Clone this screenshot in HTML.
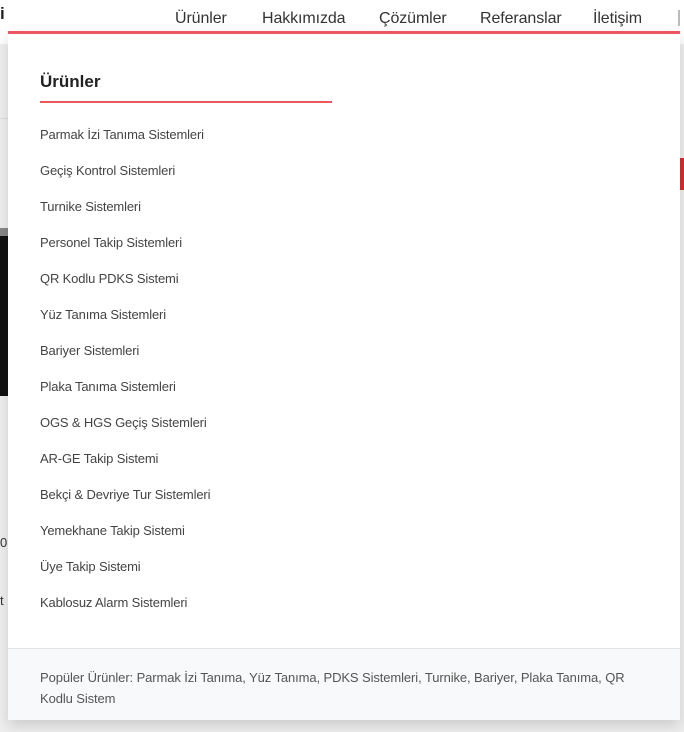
<!DOCTYPE html>
<html><head><meta charset="utf-8"><style>
*{margin:0;padding:0;box-sizing:border-box}
body{width:684px;height:732px;overflow:hidden;background:#efefef;font-family:"Liberation Sans",sans-serif;position:relative}
.hdr{position:absolute;left:0;top:0;width:684px;height:44px;background:#fff}
.nav{position:absolute;top:10px;font-size:16px;color:#333;letter-spacing:-0.1px;white-space:nowrap}
.bg1{position:absolute;left:0;top:118px;width:8px;height:1px;background:#ddd}
.img{position:absolute;left:0;top:236px;width:8px;height:160px;background:#111}
.img2{position:absolute;left:0;top:228px;width:8px;height:8px;background:#888}
.red{position:absolute;left:680px;top:158px;width:4px;height:32px;background:#d32f2f}
.panel{position:absolute;left:8px;top:31px;width:672px;height:689px;background:#fff;box-shadow:0 6px 14px rgba(0,0,0,.15)}
.bar{position:absolute;left:0;top:0;width:672px;height:3px;background:#eb5660}
.title{position:absolute;left:32px;top:41px;font-size:17px;font-weight:bold;color:#222}
.uline{position:absolute;left:32px;top:70px;width:292px;height:2px;background:#eb5660}
.item{position:absolute;left:32px;font-size:13px;color:#444;letter-spacing:-0.15px;white-space:nowrap}
.foot{position:absolute;left:0;top:617px;width:672px;height:72px;background:#f8f9fa;border-top:1px solid #e4e4e4;padding:18px 32px 0;font-size:13px;line-height:21px;color:#555;letter-spacing:-0.1px}
</style></head><body>
<div class="hdr"></div>
<div style="position:absolute;left:0;top:4px;font-size:17px;font-weight:bold;color:#222">i</div>
<div class="nav" style="left:175px">Ürünler</div>
<div class="nav" style="left:262px">Hakkımızda</div>
<div class="nav" style="left:379px">Çözümler</div>
<div class="nav" style="left:480px">Referanslar</div>
<div class="nav" style="left:593px">İletişim</div>
<div style="position:absolute;left:678px;top:10px;width:2px;height:16px;background:#bbb"></div>
<div class="bg1"></div><div class="img2"></div><div class="img"></div><div class="red"></div>
<div style="position:absolute;left:0;top:535px;font-size:13px;color:#333">0</div>
<div style="position:absolute;left:0;top:593px;font-size:13px;color:#333">t</div>
<div class="panel">
<div class="bar"></div>
<div class="title">Ürünler</div>
<div class="uline"></div>
<div class="item" style="top:96px">Parmak İzi Tanıma Sistemleri</div>
<div class="item" style="top:132px">Geçiş Kontrol Sistemleri</div>
<div class="item" style="top:168px">Turnike Sistemleri</div>
<div class="item" style="top:204px">Personel Takip Sistemleri</div>
<div class="item" style="top:240px">QR Kodlu PDKS Sistemi</div>
<div class="item" style="top:276px">Yüz Tanıma Sistemleri</div>
<div class="item" style="top:312px">Bariyer Sistemleri</div>
<div class="item" style="top:348px">Plaka Tanıma Sistemleri</div>
<div class="item" style="top:384px">OGS &amp; HGS Geçiş Sistemleri</div>
<div class="item" style="top:420px">AR-GE Takip Sistemi</div>
<div class="item" style="top:456px">Bekçi &amp; Devriye Tur Sistemleri</div>
<div class="item" style="top:492px">Yemekhane Takip Sistemi</div>
<div class="item" style="top:528px">Üye Takip Sistemi</div>
<div class="item" style="top:564px">Kablosuz Alarm Sistemleri</div>
<div class="foot">Popüler Ürünler: Parmak İzi Tanıma, Yüz Tanıma, PDKS Sistemleri, Turnike, Bariyer, Plaka Tanıma, QR Kodlu Sistem</div>
</div>
</body></html>
